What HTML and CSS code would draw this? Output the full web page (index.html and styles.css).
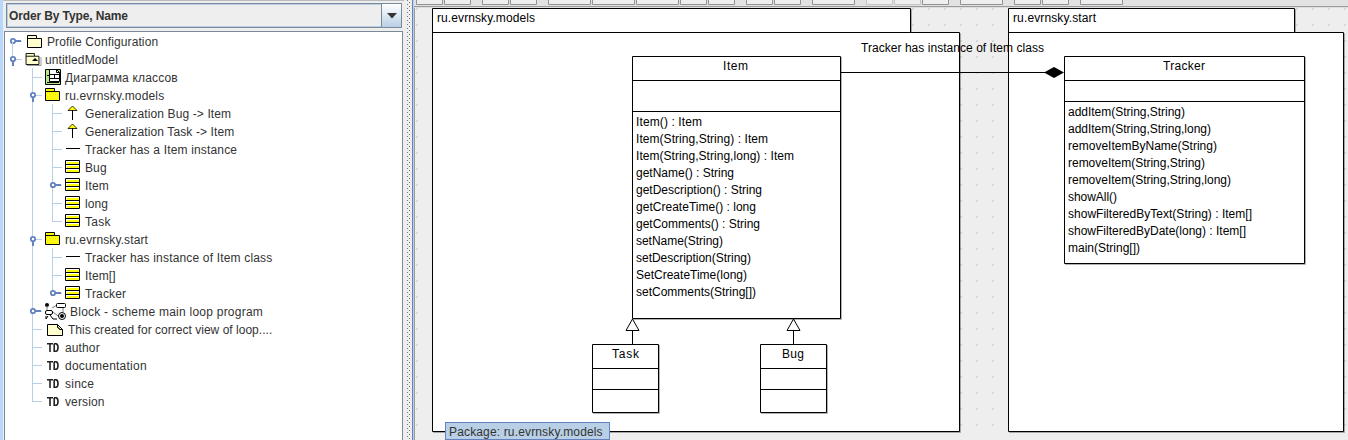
FILE: index.html
```
<!DOCTYPE html>
<html lang="ru">
<head>
<meta charset="utf-8">
<title>untitledModel</title>
<link rel="stylesheet" href="styles.css">
</head>
<body>
<svg class="defs" width="0" height="0">
  <defs>
    <pattern id="dither" width="2" height="2" patternUnits="userSpaceOnUse"><rect width="2" height="2" fill="#ffff00"/><rect width="1" height="1" fill="#f4e23c"/></pattern>
    <symbol id="g-v" viewBox="0 0 20 18"><path d="M7 0h1v18H7z" fill="#b8cfe5"/></symbol>
    <symbol id="g-t" viewBox="0 0 20 18"><path d="M7 0h1v18H7zM8 9h9v1H8z" fill="#b8cfe5"/></symbol>
    <symbol id="g-l" viewBox="0 0 20 18"><path d="M7 0h1v10H7zM8 9h9v1H8z" fill="#b8cfe5"/></symbol>
    <symbol id="g-closed" viewBox="0 0 20 18"><path d="M10 8h6v2h-6z" fill="#6382bf"/><path d="M16 9h1v1h-1z" fill="#b8cfe5"/><circle cx="8" cy="9" r="2.2" fill="#fff" stroke="#6382bf" stroke-width="1.8"/></symbol>
    <symbol id="g-open" viewBox="0 0 20 18"><path d="M7 11h2v5H7z" fill="#6382bf"/><path d="M11 9h6v1h-6z" fill="#b8cfe5"/><circle cx="8" cy="9" r="2.2" fill="#fff" stroke="#6382bf" stroke-width="1.8"/></symbol>
    <symbol id="folder" viewBox="0 0 15 13"><path d="M.5 12.500V.5h9v3h5v9zM.5 3.500h9" stroke="#000" fill="inherit"/></symbol>
    <symbol id="class" viewBox="0 0 15 13"><path d="M.5.5h14v12H.5z" fill="#fff" stroke="#000"/><path d="M2 2h12v2H2zM2 6h12v2H2zM2 10h12v2H2z" fill="#ff0"/><path d="M0 4.500h15M0 8.500h15" stroke="#000"/></symbol>
    <symbol id="gen" viewBox="0 0 15 16"><path d="M7.500 1l4.500 4.500H3z" fill="#ff0" stroke="#000" stroke-width=".8"/><path d="M7 5h1v10H7z"/></symbol>
    <symbol id="assoc" viewBox="0 0 15 16"><path d="M1 8h14v1H1z"/></symbol>
    <symbol id="td" viewBox="0 0 12 9"><path d="M0 .7h6M3 1v8M7.200 .7v7.600h1.800q2-.4 2-3.800T9 .7H7" fill="none" stroke="#222" stroke-width="1.600"/></symbol>
  </defs>
</svg>
<div class="app">
  <aside class="explorer">
    <div class="combo"><span class="combo-label">Order By Type, Name</span><span class="combo-button"><svg width="10" height="6"><path d="M0 0h10L5 5.500z" fill="#333"/></svg></span></div>
    <div class="tree">
      <div class="row"><svg class="g half"><use href="#g-v"/></svg><svg class="g over"><use href="#g-closed"/></svg><svg class="icon w22 cream"><use href="#folder" x="2" y="3" width="15" height="13"/></svg><span>Profile Configuration</span></div>
      <div class="row"><svg class="g"><path d="M7 0h1v7H7z" fill="#b8cfe5"/><use href="#g-open"/></svg><svg class="icon cream"><path d="M2 15.500h14V7" stroke="#999" fill="none"/><use href="#folder" y="3" width="15" height="12"/><path d="M7 11l3-3 3 3z"/></svg><span>untitledModel</span></div>
      <div class="row"><i></i><svg class="g"><use href="#g-t"/></svg><svg class="icon"><path d="M.5 1.500h15v15H.5z" fill="#b5e68b" stroke="#000"/><path d="M4.500 1.500h7l3 3v9h-10z" fill="#fff" stroke="#000"/><path d="M11.500 1v3.500h3M5 6.500h9M5 10.500h9M9.500 7v4M2 7.500h3M2 14.500h12" fill="none" stroke="#000"/></svg><span class="wide">Диаграмма классов</span></div>
      <div class="row"><i></i><svg class="g"><use href="#g-v"/><use href="#g-open"/></svg><svg class="icon yellow"><use href="#folder" y="2" width="15" height="13"/></svg><span class="wide">ru.evrnsky.models</span></div>
      <div class="row"><i></i><svg class="g"><use href="#g-v"/></svg><svg class="g"><use href="#g-t"/></svg><svg class="icon"><use href="#gen" y="1" width="15" height="16"/></svg><span>Generalization Bug -&gt; Item</span></div>
      <div class="row"><i></i><svg class="g"><use href="#g-v"/></svg><svg class="g"><use href="#g-t"/></svg><svg class="icon"><use href="#gen" y="1" width="15" height="16"/></svg><span>Generalization Task -&gt; Item</span></div>
      <div class="row"><i></i><svg class="g"><use href="#g-v"/></svg><svg class="g"><use href="#g-t"/></svg><svg class="icon"><use href="#assoc" width="15" height="16"/></svg><span class="wide">Tracker has a Item instance</span></div>
      <div class="row"><i></i><svg class="g"><use href="#g-v"/></svg><svg class="g"><use href="#g-t"/></svg><svg class="icon"><use href="#class" y="2" width="15" height="13"/></svg><span>Bug</span></div>
      <div class="row"><i></i><svg class="g"><use href="#g-v"/></svg><svg class="g"><use href="#g-v"/><use href="#g-closed"/></svg><svg class="icon"><use href="#class" y="2" width="15" height="13"/></svg><span>Item</span></div>
      <div class="row"><i></i><svg class="g"><use href="#g-v"/></svg><svg class="g"><use href="#g-t"/></svg><svg class="icon"><use href="#class" y="2" width="15" height="13"/></svg><span>long</span></div>
      <div class="row"><i></i><svg class="g"><use href="#g-v"/></svg><svg class="g"><use href="#g-l"/></svg><svg class="icon"><use href="#class" y="2" width="15" height="13"/></svg><span class="wider">Task</span></div>
      <div class="row"><i></i><svg class="g"><use href="#g-v"/><use href="#g-open"/></svg><svg class="icon yellow"><use href="#folder" y="2" width="15" height="13"/></svg><span>ru.evrnsky.start</span></div>
      <div class="row"><i></i><svg class="g"><use href="#g-v"/></svg><svg class="g"><use href="#g-t"/></svg><svg class="icon"><use href="#assoc" width="15" height="16"/></svg><span class="wide">Tracker has instance of Item class</span></div>
      <div class="row"><i></i><svg class="g"><use href="#g-v"/></svg><svg class="g"><use href="#g-t"/></svg><svg class="icon"><use href="#class" y="2" width="15" height="13"/></svg><span>Item[]</span></div>
      <div class="row"><i></i><svg class="g"><use href="#g-v"/></svg><svg class="g"><path d="M7 0h1v7H7z" fill="#b8cfe5"/><use href="#g-closed"/></svg><svg class="icon"><use href="#class" y="2" width="15" height="13"/></svg><span>Tracker</span></div>
      <div class="row"><i></i><svg class="g"><use href="#g-v"/><use href="#g-closed"/></svg><svg class="icon w25"><circle cx="2" cy="3" r="2"/><path d="M2 4v5M7 6l5-3M18 6v4M8 10l5 4" stroke="#777" fill="none"/><rect x="11.500" y="1.500" width="9" height="4" rx="1" fill="#fff" stroke="#000"/><rect x=".5" y="8.500" width="7" height="4" rx="1.500" fill="#fff" stroke="#000"/><circle cx="17" cy="14" r="3.500" fill="#fff" stroke="#000"/><circle cx="17" cy="14" r="2"/><path d="M1 17l2-3M5 13l3 4h4M1 14v3" stroke="#000" fill="none"/></svg><span class="wider">Block - scheme main loop program</span></div>
      <div class="row"><i></i><svg class="g"><use href="#g-t"/></svg><svg class="icon w23"><path d="M2.500 4.500h10l5 5v6h-15z" fill="#ffffce" stroke="#000"/><path d="M12.500 4.500v3h1v1h1v1h3" fill="none" stroke="#000"/></svg><span class="tight">This created for correct view of loop....</span></div>
      <div class="row"><i></i><svg class="g"><use href="#g-t"/></svg><svg class="icon"><use href="#td" x="2" y="5" width="12" height="9"/></svg><span>author</span></div>
      <div class="row"><i></i><svg class="g"><use href="#g-t"/></svg><svg class="icon"><use href="#td" x="2" y="5" width="12" height="9"/></svg><span class="wider">documentation</span></div>
      <div class="row"><i></i><svg class="g"><use href="#g-t"/></svg><svg class="icon"><use href="#td" x="2" y="5" width="12" height="9"/></svg><span class="wider">since</span></div>
      <div class="row"><i></i><svg class="g"><use href="#g-l"/></svg><svg class="icon"><use href="#td" x="2" y="5" width="12" height="9"/></svg><span>version</span></div>
    </div>
  </aside>
  <div class="divider"></div>
  <main class="editor">
    <svg class="toolbar" width="935" height="8">
      <g fill="#eee" stroke="#929292">
        <path d="M2.500-5h26V4.500h-26zM30.500-5h26V4.500h-26zM68.500-5h26V4.500h-26zM96.500-5h26V4.500h-26zM134.500-5h42V4.500h-42zM178.500-5h42V4.500h-42zM222.500-5h42V4.500h-42zM266.500-5h26V4.500h-26zM294.500-5h26V4.500h-26zM332.500-5h26V4.500h-26zM360.500-5h26V4.500h-26zM398.500-5h42V4.500h-42zM508.500-5h26V4.500h-26zM546.500-5h42V4.500h-42zM600.500-5h26V4.500h-26zM628.500-5h26V4.500h-26zM666.500-5h42V4.500h-42z"/>
        <path stroke="#c4c4c4" d="M452.500-5h26V4.500h-26zM480.500-5h26V4.500h-26z"/>
      </g>
      <path d="M0 6h935v1H0z" fill="#9b9b9b"/>
      <path d="M0 7h935v1H0z" fill="#ddd"/>
    </svg>
    <svg class="canvas" viewBox="415 8 933 432" width="933" height="432">
      <defs>
        <pattern id="grid" x="416" y="8" width="16" height="16" patternUnits="userSpaceOnUse"><rect width="2" height="2" fill="#d8d8d8"/></pattern>
      </defs>
      <rect x="415" y="8" width="933" height="432" fill="url(#grid)"/>
      <g class="node">
        <path d="M432.500 8.500h478v24h49v399h-527z"/>
        <path d="M1008.500 8.500h286v24h49v399h-335z"/>
      </g>
      <path class="line" d="M432.500 32.500h478M1008.500 32.500h286"/>
      <g class="node">
        <path d="M632.500 56.500h208v262h-208z"/>
        <path d="M1064.500 56.500h240v207h-240z"/>
        <path d="M592.500 344.500h66v68h-66z"/>
        <path d="M760.500 344.500h66v68h-66z"/>
      </g>
      <path class="line" d="M632 80.500h208M632 111.500h208M1064 80.500h240M1064 101.500h240M592 368.500h66M592 389.500h66M760 368.500h66M760 389.500h66M840 72.500h206M632.500 331v14M793.500 331v14"/>
      <path d="M1044 72.500l10-5.500 10 5.500-10 5.500z"/>
      <path class="head" d="M632.500 319l6.500 11.500h-13zM793.500 319l6.500 11.500h-13z"/>
      <g class="label">
        <text x="437" y="22" textLength="98">ru.evrnsky.models</text>
        <text x="1013" y="22" textLength="83">ru.evrnsky.start</text>
        <text x="861" y="52" textLength="183">Tracker has instance of Item class</text>
        <text x="723" y="70" textLength="25">Item</text>
        <text x="1163" y="70" textLength="42">Tracker</text>
        <text x="612" y="358" textLength="27">Task</text>
        <text x="782" y="358" textLength="22">Bug</text>
        <text x="636" y="126" textLength="66">Item() : Item</text>
        <text x="636" y="143" textLength="132">Item(String,String) : Item</text>
        <text x="636" y="160" textLength="158">Item(String,String,long) : Item</text>
        <text x="636" y="177" textLength="98">getName() : String</text>
        <text x="636" y="194" textLength="126">getDescription() : String</text>
        <text x="636" y="211" textLength="120">getCreateTime() : long</text>
        <text x="636" y="228" textLength="124">getComments() : String</text>
        <text x="636" y="245" textLength="87">setName(String)</text>
        <text x="636" y="262" textLength="115">setDescription(String)</text>
        <text x="636" y="279" textLength="111">SetCreateTime(long)</text>
        <text x="636" y="296" textLength="120">setComments(String[])</text>
        <text x="1068" y="116" textLength="117">addItem(String,String)</text>
        <text x="1068" y="133" textLength="143">addItem(String,String,long)</text>
        <text x="1068" y="150" textLength="149">removeItemByName(String)</text>
        <text x="1068" y="167" textLength="137">removeItem(String,String)</text>
        <text x="1068" y="184" textLength="163">removeItem(String,String,long)</text>
        <text x="1068" y="201" textLength="49">showAll()</text>
        <text x="1068" y="218" textLength="184">showFilteredByText(String) : Item[]</text>
        <text x="1068" y="235" textLength="178">showFilteredByDate(long) : Item[]</text>
        <text x="1068" y="252" textLength="72">main(String[])</text>
      </g>
    </svg>
    <div class="tooltip">Package: ru.evrnsky.models</div>
  </main>
</div>
</body>
</html>
```
FILE: styles.css
```
* { box-sizing: border-box; }
body {
  margin: 0;
  width: 1348px;
  height: 440px;
  overflow: hidden;
  background: #eee;
  color: #333;
  font: 12px "Liberation Sans", Arial, sans-serif;
}
.defs { position: absolute; }
.app { display: flex; height: 440px; }
.explorer {
  display: flex;
  flex: none;
  flex-direction: column;
  width: 404px;
  padding-top: 3px;
  border-left: 3px solid #b9d7fb;
  background: linear-gradient(#bbb 0 1px, #eee 1px);
}
.combo {
  display: flex;
  flex: none;
  height: 25px;
  margin: 0 2px 3px 3px;
  border: 1px solid #7a8a99;
  box-shadow: inset 0 0 0 1px #b8cfe5;
}
.combo-label {
  flex: 1;
  padding: 5px 2px;
  font-weight: bold;
  line-height: 14px;
  letter-spacing: -.12px;
}
.combo-button {
  display: flex;
  align-items: center;
  justify-content: center;
  width: 20px;
  border-left: 1px solid #7a8a99;
  background: linear-gradient(#fff, #dde8f3 50%, #b8cfe5);
}
.tree {
  flex: 1;
  margin-left: 1px;
  margin-right: 1px;
  border: 1px solid #7a8a99;
  border-bottom: 0;
  background: #fff;
}
.row {
  display: flex;
  height: 18px;
  line-height: 20px;
  white-space: pre;
  letter-spacing: .12px;
}
.row .wide { letter-spacing: .17px; }
.row .wider { letter-spacing: .24px; }
.row .tight { letter-spacing: .02px; }
.row i { width: 20px; }
.g { flex: none; width: 20px; height: 18px; }
.g.half { clip-path: inset(9px 0 0 0); }
.g.over { margin-left: -20px; }
.icon { flex: none; width: 20px; height: 18px; }
.icon.w22 { width: 22px; }
.icon.w23 { width: 23px; }
.icon.w25 { width: 25px; }
.cream { fill: #ffffce; }
.cream path { fill: #000; }
.cream path[stroke] { fill: none; }
.yellow { fill: url(#dither); }
.divider {
  flex: none;
  width: 9px;
  border-right: 1px solid #6382bf;
  background:
    radial-gradient(circle at .5px .5px, #777 .7px, transparent .8px) 3px 0 / 4px 4px,
    radial-gradient(circle at 2.5px 2.5px, #777 .7px, transparent .8px) 3px 0 / 4px 4px,
    #eee;
  box-shadow: inset 3px 0 #eee, inset -2px 0 #eee;
}
.editor {
  position: relative;
  flex: 1;
  display: flex;
  flex-direction: column;
  border-left: 1px solid #b8cfe5;
}
.toolbar { background: #e2e2e2; flex: none; }
.canvas {
  flex: none;
  width: 934px;
  border-left: 1px solid #999;
  background: #eee;
}
.node path {
  fill: #fff;
  stroke: #000;
  filter: drop-shadow(1.5px 1.5px .5px rgba(0, 0, 0, .3));
}
.line { fill: none; stroke: #000; }
.head { fill: #fff; stroke: #000; }
.label { fill: #000; font: 12px "Liberation Sans", Arial, sans-serif; }
.tooltip {
  position: absolute;
  left: 31px;
  top: 422px;
  width: 165px;
  height: 18px;
  padding-left: 3px;
  border: 1px solid #6382bf;
  background: #b8cfe5;
  line-height: 18px;
  letter-spacing: .15px;
  white-space: nowrap;
}
```
